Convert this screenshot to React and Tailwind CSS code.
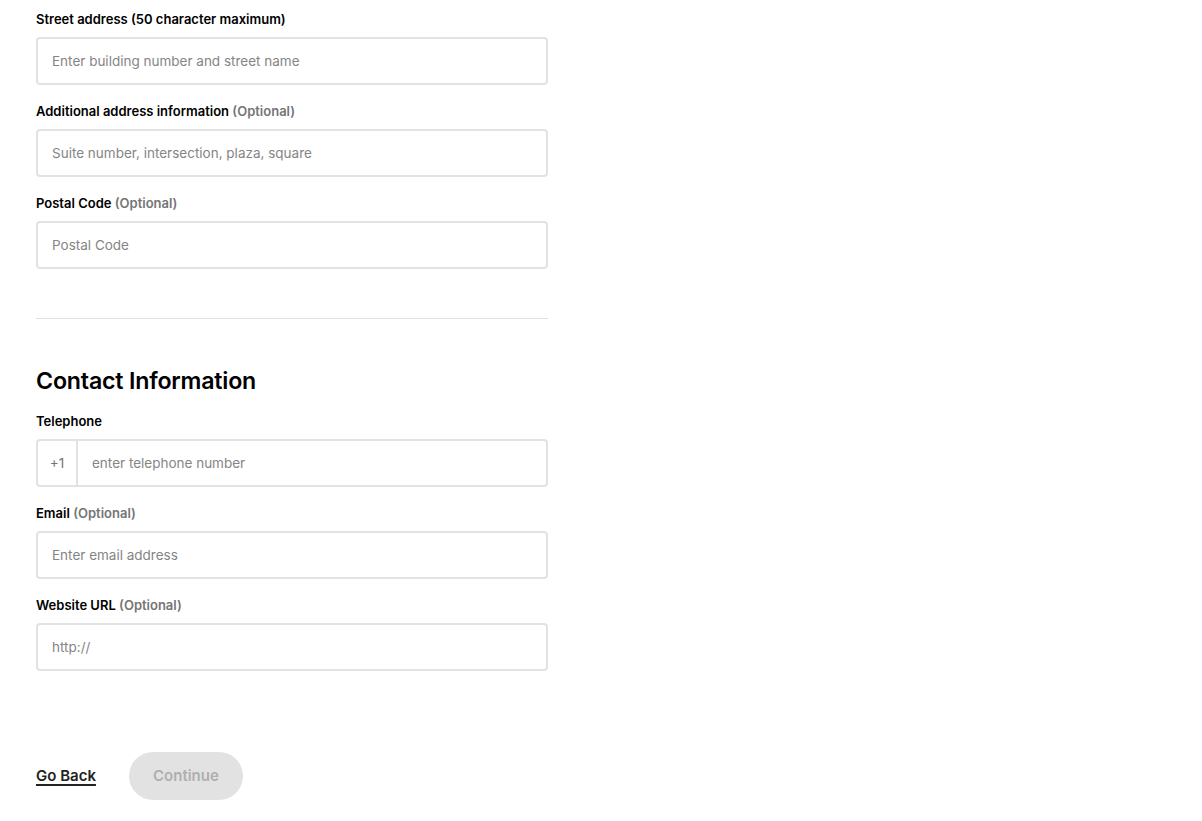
import React from "react";

function Label({ children, optional }) {
  return (
    <div className="h-[20px] leading-[20px] text-[13px] font-semibold text-black mb-[8px]">
      {children}
      {optional && <span className="text-[#757575]"> (Optional)</span>}
    </div>
  );
}

function Input({ placeholder }) {
  return (
    <input
      className="w-full h-[48px] border-2 border-[#e2e2e2] rounded-[4px] px-[14px] text-[13.5px] text-black placeholder:text-[#858585] outline-none bg-white"
      placeholder={placeholder}
    />
  );
}

function Field({ label, optional, placeholder }) {
  return (
    <div className="mb-[16px]">
      <Label optional={optional}>{label}</Label>
      <Input placeholder={placeholder} />
    </div>
  );
}

export default function App() {
  return (
    <div
      className="min-h-[821px] bg-white pl-[36px] pt-[9px]"
      style={{ fontFamily: "Inter, 'Noto Sans', sans-serif" }}
    >
      <div className="w-[512px]">
        <Field label="Street address (50 character maximum)" placeholder="Enter building number and street name" />
        <Field label="Additional address information" optional placeholder="Suite number, intersection, plaza, square" />
        <div>
          <Label optional>Postal Code</Label>
          <Input placeholder="Postal Code" />
        </div>
        <div className="mt-[49px] h-px bg-[#e2e2e2]" />
        <h2 className="mt-[48px] h-[28px] leading-[28px] text-[23.2px] font-semibold text-black mb-[16px] tracking-[-0.2px]">
          Contact Information
        </h2>
        <div className="mb-[16px]">
          <Label>Telephone</Label>
          <div className="flex h-[48px] border-2 border-[#e2e2e2] rounded-[4px]">
            <div className="w-[40px] flex items-center justify-center text-[13.5px] text-[#757575] border-r-2 border-[#e2e2e2]">
              +1
            </div>
            <input
              className="flex-1 px-[14px] text-[13.5px] text-black placeholder:text-[#858585] outline-none bg-transparent"
              placeholder="enter telephone number"
            />
          </div>
        </div>
        <Field label="Email" optional placeholder="Enter email address" />
        <div>
          <Label optional>Website URL</Label>
          <Input placeholder="http://" />
        </div>
        <div className="mt-[81px] flex items-center gap-[33px]">
          <a href="#" className="text-[15px] font-semibold text-[#222] underline underline-offset-[3px] decoration-[1.5px]">
            Go Back
          </a>
          <button
            disabled
            className="h-[48px] w-[114px] rounded-full bg-[#e2e2e2] text-[15px] font-semibold text-[#afafaf]"
          >
            Continue
          </button>
        </div>
      </div>
    </div>
  );
}
